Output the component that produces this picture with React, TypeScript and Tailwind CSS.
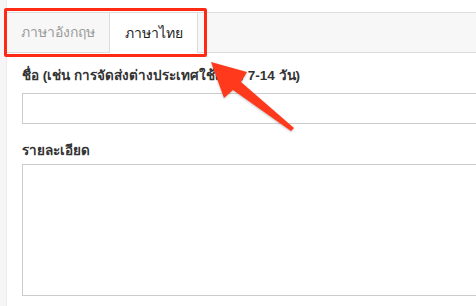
export default function App() {
  return (
    <div className="relative flex h-[306px] w-[476px] overflow-hidden bg-white font-['Liberation_Sans','Noto_Sans',sans-serif]">
      {/* left gutter */}
      <div className="w-[7px] shrink-0 border-r border-[#ececec] bg-[#f6f6f6]" />

      <div className="flex-1 pt-3">
        {/* language tabs */}
        <div className="flex h-[41px] border-y border-[#dddddd] bg-[#f7f7f7]">
          <div className="flex w-[103px] items-center justify-center border-r border-[#dddddd] text-[14px] text-[#9a9a9a]">
            ภาษาอังกฤษ
          </div>
          <div className="-mb-px flex w-[88px] items-center justify-center border-r border-[#dddddd] bg-white text-[14px] text-[#222222]">
            ภาษาไทย
          </div>
        </div>

        <div className="pl-[15px] pt-[14px]">
          <label className="mb-2 block text-[13.5px] leading-[18px] font-bold text-[#333333]">
            ชื่อ (เช่น การจัดส่งต่างประเทศใช้เวลา 7-14 วัน)
          </label>
          <div className="h-[31px] w-[470px] border border-[#cccccc]" />

          <label className="mt-[18px] mb-[4px] block text-[13.5px] leading-[18px] font-bold text-[#333333]">
            รายละเอียด
          </label>
          <div className="h-[132px] w-[470px] border border-[#cccccc]" />
        </div>
      </div>

      {/* annotation: box around tabs */}
      <div className="absolute top-[8px] left-[4px] h-[49px] w-[203px] rounded-[2px] border-[3px] border-[#ff2a14]" />

      {/* annotation: arrow */}
      <svg
        className="absolute top-0 left-0 drop-shadow-[0_1px_1px_rgba(0,0,0,0.25)]"
        width="476"
        height="306"
        viewBox="0 0 476 306"
      >
        <polygon
          points="211,62 247,72 241,82 294,128 291,131 233,90 224,98"
          fill="#ff3a1c"
        />
      </svg>
    </div>
  );
}
